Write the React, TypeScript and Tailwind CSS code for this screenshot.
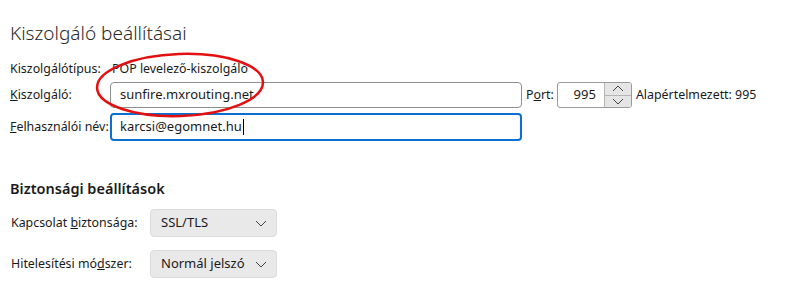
import React from "react";

const Chevron = ({ up = false }: { up?: boolean }) => (
  <svg width="12" height="7" viewBox="0 0 12 7" fill="none">
    <path
      d={up ? "M1 6 L6 1 L11 6" : "M1 1 L6 6 L11 1"}
      stroke="#444"
      strokeWidth="1"
    />
  </svg>
);

const Select = ({ value }: { value: string }) => (
  <div className="flex items-center justify-between w-[127px] h-[28px] pl-[10px] pr-[9px] bg-[#e9e9e9] border border-[#dcdcdc] rounded-[4px] text-[13px]">
    <span>{value}</span>
    <Chevron />
  </div>
);

const App = () => {
  return (
    <div
      className="relative w-[790px] h-[299px] bg-white text-[#1a1a1a] text-[12.4px] overflow-hidden whitespace-nowrap"
      style={{ fontFamily: '"Noto Sans", "Open Sans", sans-serif' }}
    >
      <div className="pl-[10px] pt-[20px]">
        <h1 className="text-[19px] font-light leading-[26px] text-[#2a2a2a]">
          Kiszolgáló beállításai
        </h1>

        <div className="mt-[15px] flex flex-col gap-[5px]">
          <div className="flex items-center h-[17px]">
            <span className="w-[100px]">Kiszolgálótípus:</span>
            <span className="pl-[2px]">POP levelező-kiszolgáló</span>
          </div>

          <div className="flex items-center h-[26px] mt-[-1px]">
            <span className="w-[100px]">
              <u>K</u>iszolgáló:
            </span>
            <div className="flex items-center w-[412px] h-[26px] px-[9px] border border-[#8f8f8f] rounded-[4px] text-[13px]">
              sunfire.mxrouting.net
            </div>
            <span className="ml-[4px]">
              P<u>o</u>rt:
            </span>
            <div className="ml-[3px] flex w-[75px] h-[26px] border border-[#9a9a9a] rounded-[3px] overflow-hidden text-[13px]">
              <div className="flex-1 flex items-center justify-end pr-[8px]">995</div>
              <div className="flex flex-col w-[27px] border-l border-[#b5b5b5] bg-[#e5e5e5]">
                <div className="flex-1 flex items-center justify-center border-b border-[#b5b5b5]">
                  <Chevron up />
                </div>
                <div className="flex-1 flex items-center justify-center">
                  <Chevron />
                </div>
              </div>
            </div>
            <span className="ml-[4px]">Alapértelmezett: 995</span>
          </div>

          <div className="flex items-center h-[28px]">
            <span className="w-[100px]">
              <u>F</u>elhasználói név:
            </span>
            <div className="flex items-center w-[412px] h-[28px] px-[8px] border-2 border-[#0a6fd0] rounded-[4px] text-[13px]">
              karcsi@egomnet.hu
              <span className="ml-[1px] w-px h-[16px] bg-black" />
            </div>
          </div>
        </div>

        <h2 className="mt-[37px] text-[14.5px] font-semibold leading-[20px] text-[#1a1a1a]">
          Biztonsági beállítások
        </h2>

        <div className="mt-[11px] flex flex-col gap-[13px]">
          <div className="flex items-center">
            <span className="w-[140px] pl-px">
              Kapcsolat <u>b</u>iztonsága:
            </span>
            <Select value="SSL/TLS" />
          </div>
          <div className="flex items-center">
            <span className="w-[140px] pl-px">
              Hitelesítési mó<u>d</u>szer:
            </span>
            <Select value="Normál jelszó" />
          </div>
        </div>
      </div>

      <svg
        className="absolute left-0 top-0 pointer-events-none"
        width="790"
        height="299"
      >
        <ellipse
          cx="180"
          cy="85"
          rx="83"
          ry="31"
          fill="none"
          stroke="#e41010"
          strokeWidth="2.5"
          transform="rotate(-2 180 85)"
        />
      </svg>
    </div>
  );
};

export default App;
